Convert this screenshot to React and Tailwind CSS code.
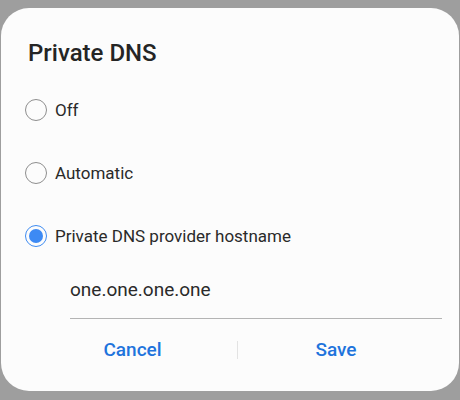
import React, { useState } from 'react';

const options = ['Off', 'Automatic', 'Private DNS provider hostname'];

const Radio = ({ checked }) => (
  <span
    className={`w-[22px] h-[22px] rounded-full flex items-center justify-center shrink-0 border-[1.5px] ${
      checked ? 'border-[#3f8cf2]' : 'border-[#8e8e8e]'
    }`}
  >
    {checked && <span className="w-[14px] h-[14px] rounded-full bg-[#3d8af4]" />}
  </span>
);

const App = () => {
  const [selected, setSelected] = useState(2);

  return (
    <div
      className="w-[460px] h-[400px] bg-[#9e9e9e] pt-[8px] pl-px pr-[1px]"
      style={{ fontFamily: 'Roboto, "Noto Sans", sans-serif' }}
    >
      <div className="h-[383px] rounded-[28px] bg-[#fcfcfc] flex flex-col">
        <h1 className="pl-[27px] pt-[31px] text-[24px] leading-[28px] font-medium text-[#252525]">
          Private DNS
        </h1>

        <div className="mt-[11px] flex flex-col">
          {options.map((opt, i) => (
            <button
              key={opt}
              onClick={() => setSelected(i)}
              className="h-[63px] flex items-center gap-[8px] pl-[24px] text-left"
            >
              <Radio checked={selected === i} />
              <span className="text-[17px] leading-[20px] text-[#2a2a2a]">{opt}</span>
            </button>
          ))}
        </div>

        <div className="ml-[69px] mr-[17px] mt-[11px] pb-[16px] border-b border-[#b4b4b4]">
          <span className="block text-[19px] leading-[24px] text-[#2a2a2a]">one.one.one.one</span>
        </div>

        <div className="mt-[19px] flex items-center pl-[27px]">
          <button className="w-[209px] text-center text-[19px] leading-[24px] font-medium text-[#1f74dc]">
            Cancel
          </button>
          <span className="w-px h-[18px] bg-[#e3e3e3]" />
          <button className="w-[196px] text-center text-[19px] leading-[24px] font-medium text-[#1f74dc]">
            Save
          </button>
        </div>
      </div>
    </div>
  );
};

export default App;
